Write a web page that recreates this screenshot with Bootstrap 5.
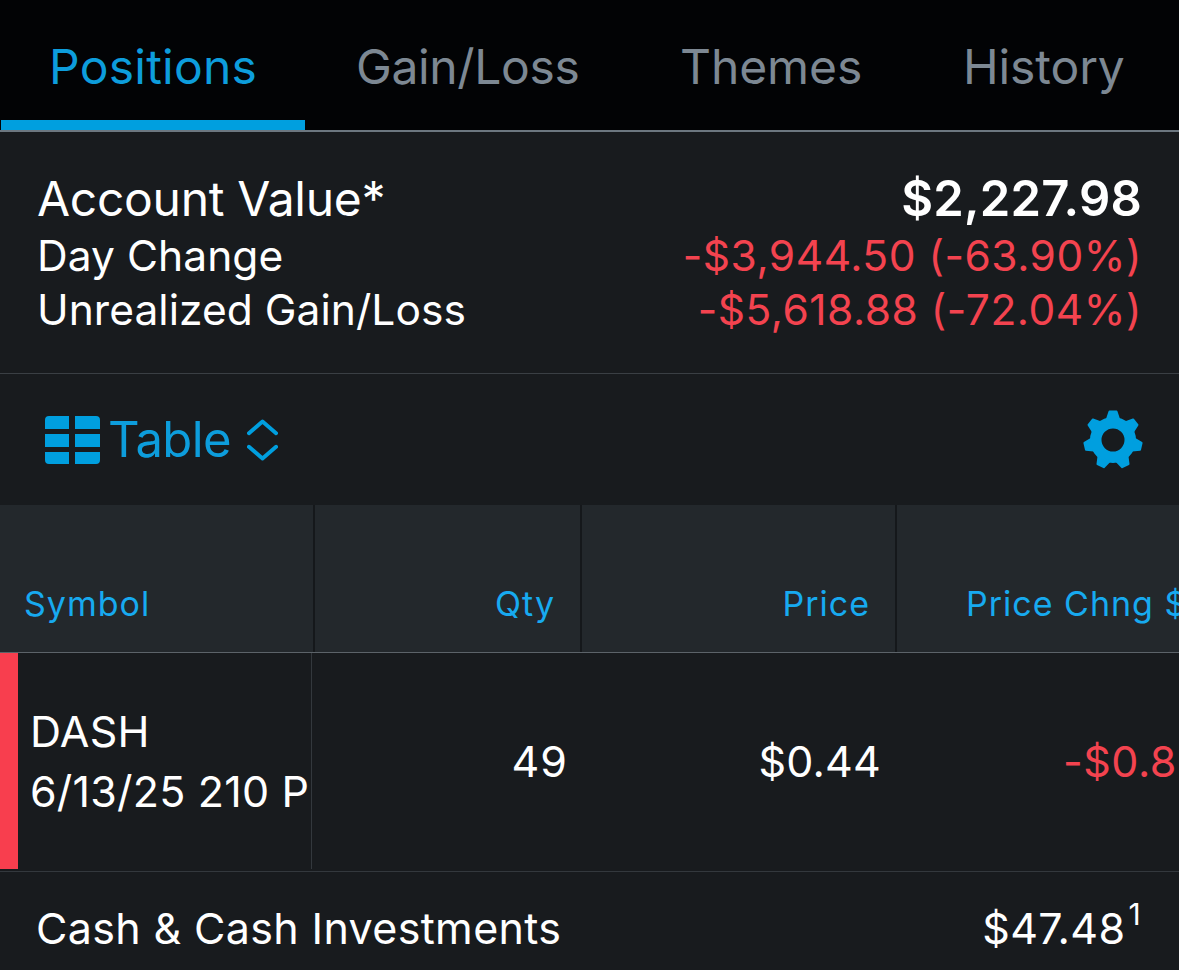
<!DOCTYPE html>
<html lang="en">
<head>
<meta charset="utf-8">
<title>Positions</title>
<link rel="stylesheet" href="https://cdn.jsdelivr.net/npm/bootstrap@5.3.0/dist/css/bootstrap.min.css">
<style>
html,body{height:970px;overflow:hidden;background:#181b1e;}
body{font-family:Inter,"Liberation Sans",sans-serif;color:#fff;width:1179px;}
.tabbar{height:132px;background:#020305;border-bottom:2px solid #6c7780;}
.tabitem{height:130px;font-size:48px;color:#7d8893;line-height:1;padding-top:43px;letter-spacing:-.1px;white-space:nowrap;}
.tabitem.on{color:#0d9ddc;border-bottom:10px solid #009fdf;margin-left:1px;letter-spacing:.25px;}
.tab1{width:304px;padding-left:48px;}
.tab2{width:323px;padding-left:51px;letter-spacing:-.35px;}
.tab3{width:283px;padding-left:52px;}
.tab4{padding-left:52px;}
.summary{height:242px;border-bottom:1px solid #3a3f44;padding:41px 37px 0 37px;}
.sumrow{white-space:nowrap;}
.sum1{font-size:48px;height:57px;line-height:52px;letter-spacing:-.3px;}
.sum1 b{font-size:49px;font-weight:600;letter-spacing:.2px;}
.sum2{font-size:42.500px;height:54px;line-height:52px;letter-spacing:.05px;}
.down{color:#f3434f;letter-spacing:.5px;}
.toolbar{height:131px;padding:0 36px 0 45px;color:#0d9ddc;font-size:49px;letter-spacing:-.6px;}
.headrow{height:148px;background:#23282c;border-bottom:1px solid #5c6369;font-size:34px;color:#17aaf0;letter-spacing:1px;}
.hcell{height:147px;padding-bottom:23px;border-right:2px solid #15181b;white-space:nowrap;overflow:hidden;display:flex;align-items:flex-end;}
.c1{width:315px;flex:none;}
.c2{width:267px;flex:none;justify-content:flex-end;}
.c3{width:315px;flex:none;justify-content:flex-end;}
.c4{flex:1 1 0;min-width:0;border-right:0;}
.c1.hcell{padding-left:24px;}
.c2.hcell{padding-right:25px;}
.c3.hcell{padding-right:25px;}
.c4.hcell{padding-left:69px;}
.datarow{height:219px;border-bottom:1px solid #33383d;font-size:43px;letter-spacing:.2px;padding-bottom:2px;}
.flagbar{width:18px;background:#f83e4e;flex:none;height:100%;}
.dsym{width:294px;flex:none;border-right:1px solid #33383d;height:100%;padding-left:12px;line-height:60px;white-space:nowrap;overflow:hidden;}
.dqty{width:257px;flex:none;padding-right:1px;text-align:right;letter-spacing:1px;}
.dprice{width:314px;flex:none;padding-right:2px;text-align:right;}
.dchg{flex:1 1 0;min-width:0;padding-left:180px;white-space:nowrap;overflow:hidden;}
.cashrow{padding:26px 38px 0 36px;font-size:43px;line-height:60px;letter-spacing:.35px;white-space:nowrap;}
.cashrow sup{font-size:30px;top:-.65em;line-height:0;margin-left:3px;}
</style>
</head>
<body>
<nav class="tabbar d-flex">
  <div class="tabitem on tab1">Positions</div>
  <div class="tabitem tab2">Gain/Loss</div>
  <div class="tabitem tab3">Themes</div>
  <div class="tabitem tab4">History</div>
</nav>
<section class="summary">
  <div class="sumrow sum1 d-flex justify-content-between"><span>Account Value*</span><b>$2,227.98</b></div>
  <div class="sumrow sum2 d-flex justify-content-between"><span>Day Change</span><span class="down">-$3,944.50 (-63.90%)</span></div>
  <div class="sumrow sum2 d-flex justify-content-between"><span>Unrealized Gain/Loss</span><span class="down">-$5,618.88 (-72.04%)</span></div>
</section>
<section class="toolbar d-flex align-items-center justify-content-between">
  <div class="d-flex align-items-center">
    <svg width="55" height="48" viewBox="0 0 55 48" fill="#009fdf" class="me-2"><path d="M4 0H24V13H0V4A4 4 0 0 1 4 0ZM30 0H51A4 4 0 0 1 55 4V13H30ZM0 18H24V31H0ZM30 18H55V31H30ZM0 36H24V48H4A4 4 0 0 1 0 44ZM30 36H55V44A4 4 0 0 1 51 48H30Z"/></svg>
    <span>Table</span>
    <svg width="31" height="44" viewBox="0 0 32 44" fill="none" stroke="#009fdf" stroke-width="4" stroke-linecap="round" stroke-linejoin="round" class="ms-3"><path d="M2 15L16 3L30 15M2 29L16 41L30 29"/></svg>
  </div>
  <svg width="60" height="60" viewBox="0 0 60 60" fill="#009fdf">
    <path fill-rule="evenodd" d="M30 7A23 23 0 1 0 30 53 23 23 0 1 0 30 7ZM30 18.500A11.500 11.500 0 1 1 30 41.500 11.500 11.500 0 1 1 30 18.500Z"/>
    <g stroke="#009fdf" stroke-width="2" stroke-linejoin="round">
      <path id="gearTooth" d="M24 9L26.500 1.500H33.500L36 9Z"/>
      <use href="#gearTooth" transform="rotate(51.43 30 30)"/>
      <use href="#gearTooth" transform="rotate(102.86 30 30)"/>
      <use href="#gearTooth" transform="rotate(154.29 30 30)"/>
      <use href="#gearTooth" transform="rotate(205.71 30 30)"/>
      <use href="#gearTooth" transform="rotate(257.14 30 30)"/>
      <use href="#gearTooth" transform="rotate(308.57 30 30)"/>
    </g>
  </svg>
</section>
<div class="headrow d-flex">
  <div class="hcell c1">Symbol</div>
  <div class="hcell c2">Qty</div>
  <div class="hcell c3">Price</div>
  <div class="hcell c4">Price Chng $</div>
</div>
<div class="datarow d-flex align-items-center">
  <div class="flagbar"></div>
  <div class="dsym d-flex flex-column justify-content-center"><div>DASH</div><div>6/13/25 210 P</div></div>
  <div class="dqty">49</div>
  <div class="dprice">$0.44</div>
  <div class="dchg down">-$0.8</div>
</div>
<div class="cashrow d-flex justify-content-between"><span>Cash &amp; Cash Investments</span><span>$47.48<sup>1</sup></span></div>
<script src="https://cdn.jsdelivr.net/npm/bootstrap@5.3.0/dist/js/bootstrap.bundle.min.js"></script>
</body>
</html>
